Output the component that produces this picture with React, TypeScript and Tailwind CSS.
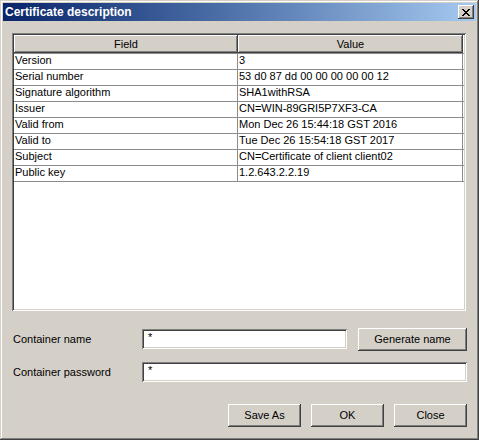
import React from "react";

const rows: [string, string][] = [
  ["Version", "3"],
  ["Serial number", "53 d0 87 dd 00 00 00 00 00 12"],
  ["Signature algorithm", "SHA1withRSA"],
  ["Issuer", "CN=WIN-89GRI5P7XF3-CA"],
  ["Valid from", "Mon Dec 26 15:44:18 GST 2016"],
  ["Valid to", "Tue Dec 26 15:54:18 GST 2017"],
  ["Subject", "CN=Certificate of client client02"],
  ["Public key", "1.2.643.2.2.19"],
];

const raised =
  "shadow-[inset_-1px_-1px_#404040,inset_1px_1px_#ffffff,inset_-2px_-2px_#808080,inset_2px_2px_#d4d0c8]";
const sunken =
  "shadow-[inset_1px_1px_#808080,inset_-1px_-1px_#ffffff,inset_2px_2px_#404040,inset_-2px_-2px_#d4d0c8]";

function Button({ label, w }: { label: string; w: string }) {
  return (
    <div
      className={`${w} h-[23px] bg-[#d4d0c8] ${raised} flex items-center justify-center text-[11px] text-black`}
    >
      {label}
    </div>
  );
}

export default function App() {
  return (
    <div
      className="w-[479px] h-[440px] bg-[#d4d0c8] p-[3px] flex flex-col shadow-[inset_-1px_-1px_#404040,inset_1px_1px_#d4d0c8,inset_-2px_-2px_#808080,inset_2px_2px_#ffffff]"
      style={{ fontFamily: '"Liberation Sans", Arial, sans-serif' }}
    >
      {/* Title bar */}
      <div className="h-[18px] flex items-center justify-between bg-gradient-to-r from-[#0a246a] to-[#a6caf0] pl-[2px] pr-[2px]">
        <span className="text-[12px] font-bold text-white leading-none">Certificate description</span>
        <div className={`w-[16px] h-[14px] bg-[#d4d0c8] ${raised} flex items-center justify-center`}>
          <svg width="8" height="7" viewBox="0 0 8 7" shapeRendering="crispEdges">
            <path
              d="M0 0h2v1h-2zM6 0h2v1h-2zM1 1h2v1h-2zM5 1h2v1h-2zM2 2h4v1h-4zM3 3h2v1h-2zM2 4h4v1h-4zM1 5h2v1h-2zM5 5h2v1h-2zM0 6h2v1h-2zM6 6h2v1h-2z"
              fill="#000"
            />
          </svg>
        </div>
      </div>

      {/* Body */}
      <div className="flex-1 flex flex-col px-[9px] pt-[12px] text-[11px] text-black">
        {/* Table panel */}
        <div className={`w-[454px] h-[278px] bg-white ${sunken} p-[2px]`}>
          <div className="flex h-[18px]">
            <div className={`w-[224px] h-[18px] bg-[#d4d0c8] ${raised} flex items-center justify-center`}>
              Field
            </div>
            <div className={`w-[225px] h-[18px] bg-[#d4d0c8] ${raised} flex items-center justify-center`}>
              Value
            </div>
          </div>
          <div className="border-t border-[#8c8c8c] w-[450px]">
            {rows.map(([f, v]) => (
              <div key={f} className="flex h-[16px] border-b border-[#8c8c8c] w-[450px]">
                <div className="w-[224px] pl-[1px] border-r border-[#8c8c8c] leading-[13px] whitespace-nowrap">
                  {f}
                </div>
                <div className="w-[225px] pl-[1px] border-r border-[#8c8c8c] leading-[13px] whitespace-nowrap">
                  {v}
                </div>
              </div>
            ))}
          </div>
        </div>

        {/* Container name */}
        <div className="flex items-start mt-[17px] h-[23px]">
          <div className="w-[130px] pl-[1px] h-[23px] flex items-center">Container name</div>
          <div className={`w-[205px] h-[20px] mt-[1px] bg-white ${sunken} pl-[6px] pt-[3px] leading-none`}>*</div>
          <div className="ml-[11px]">
            <Button label="Generate name" w="w-[109px]" />
          </div>
        </div>

        {/* Container password */}
        <div className="flex items-center mt-[11px] h-[20px]">
          <div className="w-[130px] pl-[1px]">Container password</div>
          <div className={`w-[325px] h-[20px] bg-white ${sunken} pl-[6px] pt-[3px] leading-none`}>*</div>
        </div>

        {/* Buttons */}
        <div className="flex justify-end gap-[10px] mt-[22px]">
          <Button label="Save As" w="w-[73px]" />
          <Button label="OK" w="w-[73px]" />
          <Button label="Close" w="w-[73px]" />
        </div>
      </div>
    </div>
  );
}
